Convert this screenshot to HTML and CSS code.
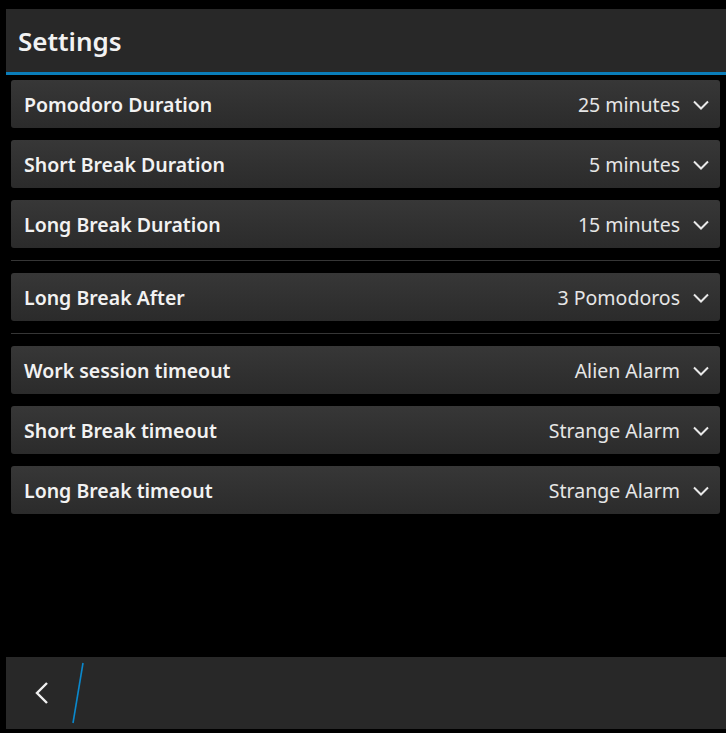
FILE: index.html
```html
<!DOCTYPE html>
<html>
<head>
<meta charset="utf-8">
<link rel="stylesheet" href="styles.css">
</head>
<body>
<div class="screen">
  <header class="titlebar"><h1 class="title">Settings</h1></header>
  <main class="list">
    <div class="row"><span class="label">Pomodoro Duration</span><span class="value">25 minutes</span><svg class="chev" viewBox="0 0 16 10"><path d="M1 1.5 L8 8.5 L15 1.5"/></svg></div>
    <div class="row"><span class="label">Short Break Duration</span><span class="value">5 minutes</span><svg class="chev" viewBox="0 0 16 10"><path d="M1 1.5 L8 8.5 L15 1.5"/></svg></div>
    <div class="row"><span class="label">Long Break Duration</span><span class="value">15 minutes</span><svg class="chev" viewBox="0 0 16 10"><path d="M1 1.5 L8 8.5 L15 1.5"/></svg></div>
    <div class="sep"></div>
    <div class="row"><span class="label">Long Break After</span><span class="value">3 Pomodoros</span><svg class="chev" viewBox="0 0 16 10"><path d="M1 1.5 L8 8.5 L15 1.5"/></svg></div>
    <div class="sep"></div>
    <div class="row"><span class="label">Work session timeout</span><span class="value">Alien Alarm</span><svg class="chev" viewBox="0 0 16 10"><path d="M1 1.5 L8 8.5 L15 1.5"/></svg></div>
    <div class="row"><span class="label">Short Break timeout</span><span class="value">Strange Alarm</span><svg class="chev" viewBox="0 0 16 10"><path d="M1 1.5 L8 8.5 L15 1.5"/></svg></div>
    <div class="row"><span class="label">Long Break timeout</span><span class="value">Strange Alarm</span><svg class="chev" viewBox="0 0 16 10"><path d="M1 1.5 L8 8.5 L15 1.5"/></svg></div>
  </main>
  <footer class="actionbar">
    <button class="back">
      <svg class="back-icon" viewBox="0 0 14 24"><path d="M12 2 L2 12 L12 22"/></svg>
      <svg class="slash" viewBox="0 0 12 62"><path d="M11 1 L1 61"/></svg>
    </button>
  </footer>
</div>
</body>
</html>
```
FILE: styles.css
```css
html, body {
  margin: 0;
  padding: 0;
  background: #000;
}
body {
  font-family: "Noto Sans", "Open Sans", sans-serif;
  color: #f0f0f0;
}
.screen {
  height: 733px;
  display: flex;
  flex-direction: column;
}
.titlebar {
  margin: 9px 0 0 6px;
  height: 63px;
  background: #282828;
  border-bottom: 3px solid #0a7db9;
  display: flex;
  align-items: center;
  padding-left: 12px;
}
.title {
  margin: 0;
  font-size: 26px;
  font-weight: 600;
  color: #f2f2f2;
}
.list {
  margin: 5px 6px 0 11px;
  display: flex;
  flex-direction: column;
  gap: 12px;
}
.row {
  height: 48px;
  box-sizing: border-box;
  border-radius: 3px;
  background: linear-gradient(#373737, #2b2b2b);
  display: flex;
  align-items: center;
  padding: 1px 11px 0 13px;
}
.label {
  font-size: 19.5px;
  font-weight: 600;
  color: #f2f2f2;
  flex: 1;
}
.value {
  font-size: 19.5px;
  color: #e6e6e6;
}
.chev {
  width: 16px;
  height: 10px;
  margin-left: 13px;
  fill: none;
  stroke: #e8e8e8;
  stroke-width: 2;
}
.sep {
  height: 1px;
  background: #363636;
}
.actionbar {
  margin: auto 0 4px 6px;
  height: 72px;
  background: #282828;
  display: flex;
  align-items: stretch;
}
.back {
  background: none;
  border: 0;
  padding: 0;
  display: flex;
  align-items: center;
  position: relative;
  width: 80px;
}
.back-icon {
  width: 14px;
  height: 24px;
  margin-left: 29px;
  fill: none;
  stroke: #f0f0f0;
  stroke-width: 2.4;
}
.slash {
  position: absolute;
  left: 66px;
  top: 5px;
  width: 12px;
  height: 62px;
  fill: none;
  stroke: #0a88cc;
  stroke-width: 1.6;
}
```
